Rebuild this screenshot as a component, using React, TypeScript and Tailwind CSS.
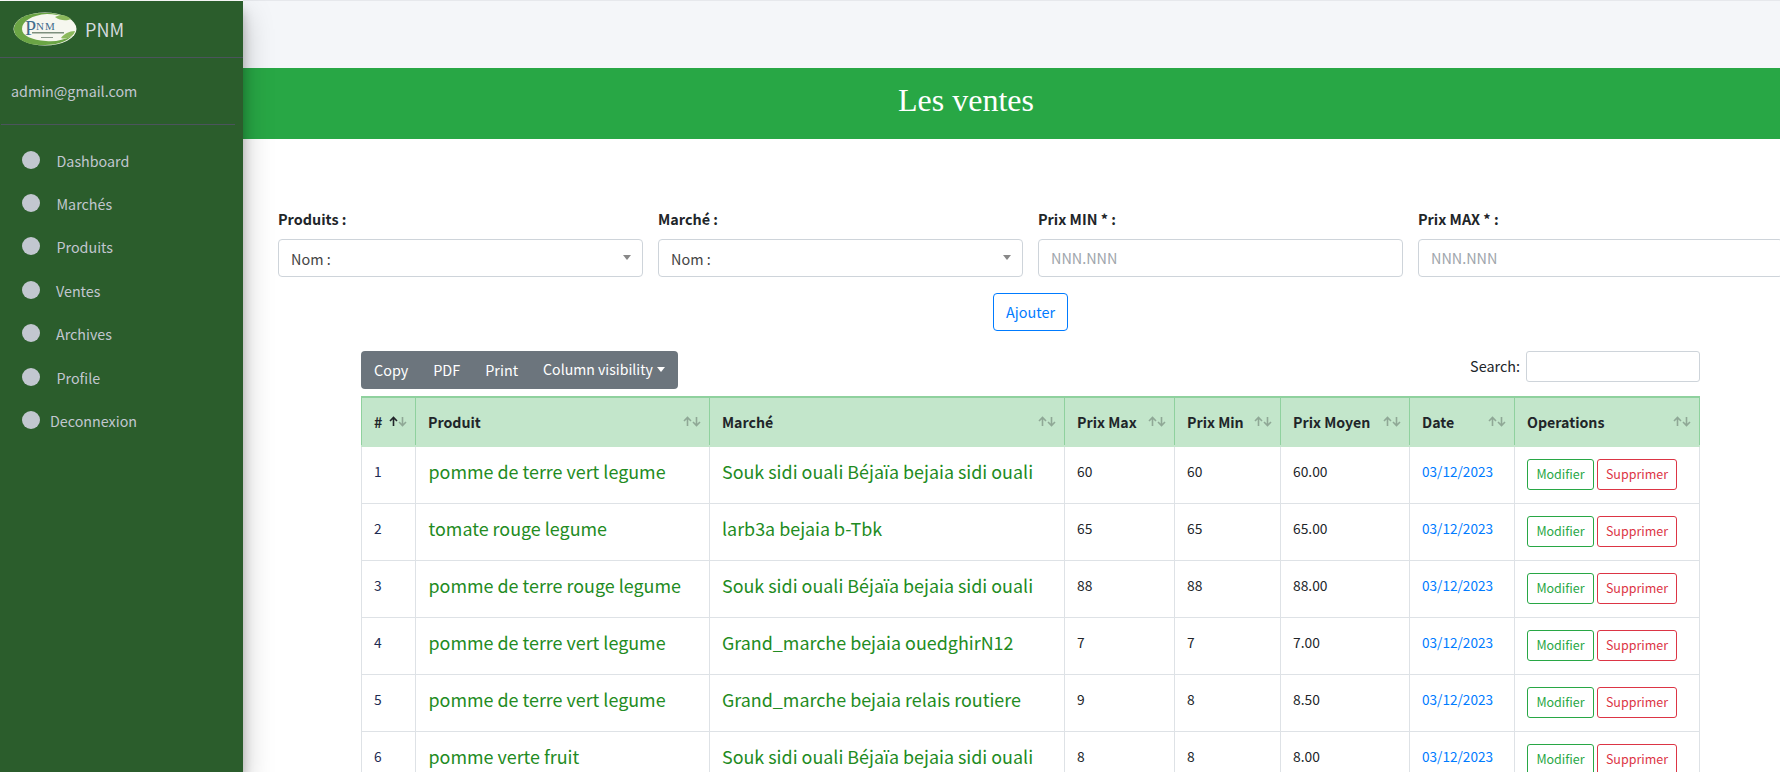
import * as React from "react";

const FONT = "font-['Noto_Sans_CJK_SC','Noto_Sans',sans-serif]";

const NAV = [
  { label: "Dashboard", gap: "ml-[16.5px]" },
  { label: "Marchés", gap: "ml-[16.5px]" },
  { label: "Produits", gap: "ml-[16.5px]" },
  { label: "Ventes", gap: "ml-[16px]" },
  { label: "Archives", gap: "ml-[16px]" },
  { label: "Profile", gap: "ml-[16.5px]" },
  { label: "Deconnexion", gap: "ml-[10px]" },
];

const ROWS = [
  ["1", "pomme de terre vert legume", "Souk sidi ouali Béjaïa bejaia sidi ouali", "60", "60", "60.00"],
  ["2", "tomate rouge legume", "larb3a bejaia b-Tbk", "65", "65", "65.00"],
  ["3", "pomme de terre rouge legume", "Souk sidi ouali Béjaïa bejaia sidi ouali", "88", "88", "88.00"],
  ["4", "pomme de terre vert legume", "Grand_marche bejaia ouedghirN12", "7", "7", "7.00"],
  ["5", "pomme de terre vert legume", "Grand_marche bejaia relais routiere", "9", "8", "8.50"],
  ["6", "pomme verte fruit", "Souk sidi ouali Béjaïa bejaia sidi ouali", "8", "8", "8.00"],
];

const COLUMNS = [
  { label: "#", width: "w-[54px]" },
  { label: "Produit", width: "w-[294px]" },
  { label: "Marché", width: "w-[355px]" },
  { label: "Prix Max", width: "w-[110px]" },
  { label: "Prix Min", width: "w-[106px]" },
  { label: "Prix Moyen", width: "w-[129px]" },
  { label: "Date", width: "w-[105px]" },
  { label: "Operations", width: "w-[185px]" },
];

function Logo() {
  return (
    <svg width="64" height="34" viewBox="0 0 64 34" className="shrink-0">
      <ellipse cx="32" cy="17" rx="31.5" ry="16.5" fill="#f6f7ef" />
      <path d="M34 1C15 0 1 7 1 17c0 10 14 17 31 16 11 0 21-3 27-9-8 4-17 6-26 5C19 28 9 24 9 17 9 9 19 3 34 2c7 0 14 1 20 4-5-3-12-5-20-5z" fill="#6ba545" />
      <path d="M42 5c6-3 12-2 16 2-4 2-11 2-16-2zM48 26c3-4 8-7 14-7-1 5-8 9-14 7z" fill="#8bb95c" />
      <text x="12" y="23" fontFamily="'Liberation Serif',serif" fontSize="20" fill="#3f6d8c">P</text>
      <text x="23" y="18" fontFamily="'Liberation Serif',serif" fontSize="11" letterSpacing="1" fill="#3f6d8c">NM</text>
      <rect x="19" y="20" width="32" height="1.5" fill="#7d8f7d" />
      <rect x="28" y="25" width="12" height="1" fill="#8d9a8d" />
    </svg>
  );
}

function Sidebar() {
  return (
    <aside className="relative z-10 mt-px flex w-[243px] shrink-0 flex-col self-stretch bg-[#2b5d2c] shadow-[0_14px_28px_rgba(0,0,0,0.25),0_10px_10px_rgba(0,0,0,0.22)]">
      <div className="flex h-[57px] items-center gap-[8px] border-b border-[#4b545c] pl-[13px]">
        <Logo />
        <span className="text-[18px] leading-none text-[#d4d9dd]">PNM</span>
      </div>
      <div className="mr-[8px] ml-px flex h-[67px] items-center border-b border-[#4b545c] pl-[10px]">
        <span className="text-[14.3px] leading-none text-[#c2c7d0]">admin@gmail.com</span>
      </div>
      <nav className="flex flex-col pt-[14px]">
        {NAV.map((item) => (
          <div key={item.label} className="flex h-[43.4px] items-center pl-[22px]">
            <span className="h-[18px] w-[18px] shrink-0 -translate-y-px rounded-full bg-[#c2c7d0]" />
            <span className={`${item.gap} text-[14.3px] leading-none text-[#c2c7d0]`}>{item.label}</span>
          </div>
        ))}
      </nav>
    </aside>
  );
}

function SelectField({ label }: { label: string }) {
  return (
    <div className="w-[365px] shrink-0">
      <label className="block h-[30px] text-[14.4px] leading-[20px] font-bold text-[#212529]">{label}</label>
      <div className="flex h-[38px] items-center justify-between rounded-[4px] border border-[#ced4da] pr-[11px] pl-[12px] text-[14.4px] text-[#444]">
        <span className="translate-y-px">Nom :</span>
        <span className="-translate-y-px border-x-[4px] border-t-[5px] border-x-transparent border-t-[#888]" />
      </div>
    </div>
  );
}

function PriceField({ label }: { label: string }) {
  return (
    <div className="w-[365px] shrink-0">
      <label className="block h-[30px] text-[14.4px] leading-[20px] font-bold text-[#212529]">{label}</label>
      <input
        placeholder="NNN.NNN"
        className={`h-[38px] w-full rounded-[4px] border border-[#ced4da] px-[12px] pb-[2px] text-[14.4px] outline-none placeholder:text-[#a0a6ac] ${FONT}`}
      />
    </div>
  );
}

function SortIcon({ active }: { active?: boolean }) {
  return (
    <svg width="18" height="11" viewBox="0 0 18 11" fill="none" strokeWidth="1.6" className="shrink-0 -translate-y-px">
      <path d="M4.5 10V1.5M1 5l3.5-3.5L8 5" stroke={active ? "#212529" : "#8fa896"} />
      <path d="M13.5 1v8.5M10 6l3.5 3.5L17 6" stroke="#8fa896" />
    </svg>
  );
}

function SalesTable() {
  return (
    <table className="w-[1338px] table-fixed border-collapse text-[13.8px] text-[#212529]">
      <thead>
        <tr className="h-[49px] bg-[#c3e6cb]">
          {COLUMNS.map((col, idx) => (
            <th key={col.label} className={`${col.width} border-x border-t-2 border-b-2 border-x-[#8fd19e] border-t-[#8fd19e] border-b-[#c3e6cb] p-0 text-left text-[14.2px] font-bold`}>
              <div className="flex translate-y-px items-center justify-between pr-[8px] pl-[12px] whitespace-nowrap">
                <span className="leading-none">{col.label}</span>
                <SortIcon active={idx === 0} />
              </div>
            </th>
          ))}
        </tr>
      </thead>
      <tbody>
        {ROWS.map((row) => (
          <tr key={row[0]} className="h-[57px]">
            <td className="border border-[#dee2e6] pb-[7px] pl-[12px] align-middle text-[#1d2b52]">{row[0]}</td>
            <td className="border border-[#dee2e6] pb-[7px] pl-[12.5px] align-middle text-[17.9px] whitespace-nowrap text-[#228b22]">{row[1]}</td>
            <td className="border border-[#dee2e6] pb-[7px] pl-[12px] align-middle text-[17.9px] whitespace-nowrap text-[#228b22]">{row[2]}</td>
            <td className="border border-[#dee2e6] pb-[7px] pl-[12px] align-middle">{row[3]}</td>
            <td className="border border-[#dee2e6] pb-[7px] pl-[12px] align-middle">{row[4]}</td>
            <td className="border border-[#dee2e6] pb-[7px] pl-[12px] align-middle">{row[5]}</td>
            <td className="border border-[#dee2e6] pb-[7px] pl-[12px] align-middle text-[13.6px] text-[#007bff]">03/12/2023</td>
            <td className="border border-[#dee2e6] pb-[1px] pl-[12px] align-middle">
              <div className="flex gap-[3px]">
                <button className="h-[31px] w-[67px] rounded-[3px] border border-[#28a745] text-[12.5px] text-[#28a745]">Modifier</button>
                <button className="h-[31px] w-[80px] rounded-[3px] border border-[#dc3545] text-[12.5px] text-[#dc3545]">Supprimer</button>
              </div>
            </td>
          </tr>
        ))}
      </tbody>
    </table>
  );
}

export default function App() {
  return (
    <div className={`flex h-[772px] w-[1780px] overflow-hidden bg-white ${FONT}`}>
      <Sidebar />
      <main className="flex min-w-0 flex-1 flex-col">
        <div className="h-[68px] shrink-0 border-t border-[#e6e8ec] bg-[#f4f6f9]" />
        <div className="flex h-[71px] shrink-0 items-center justify-center bg-[#28a745] pr-[91px] pb-[7px] font-['Liberation_Serif',serif] text-[32px] text-white">
          Les ventes
        </div>
        <div className="flex gap-[15px] pt-[70px] pl-[35px]">
          <SelectField label="Produits :" />
          <SelectField label="Marché :" />
          <PriceField label="Prix MIN * :" />
          <PriceField label="Prix MAX * :" />
        </div>
        <div className="pt-[16px] pl-[750px]">
          <button className="h-[38px] w-[75px] rounded-[4px] border border-[#007bff] text-[14.4px] text-[#007bff]">Ajouter</button>
        </div>
        <div className="pt-[20px] pl-[118px]">
          <div className="flex h-[38px] w-[1339px] items-start justify-between">
            <div className="flex h-[38px] items-center gap-[25px] rounded-[4px] bg-[#6c757d] px-[13px] text-[14.4px] text-white">
              <span>Copy</span>
              <span>PDF</span>
              <span>Print</span>
              <span className="flex items-center gap-[4px] text-[14.1px]">
                Column visibility
                <span className="border-x-[4px] border-t-[5px] border-x-transparent border-t-white" />
              </span>
            </div>
            <div className="flex items-center gap-[6px] text-[14.4px] text-[#212529]">
              <span className="-translate-y-px">Search:</span>
              <input className="h-[31px] w-[174px] rounded-[3px] border border-[#ced4da] outline-none" />
            </div>
          </div>
          <div className="pt-[7px]">
            <SalesTable />
          </div>
        </div>
      </main>
    </div>
  );
}
